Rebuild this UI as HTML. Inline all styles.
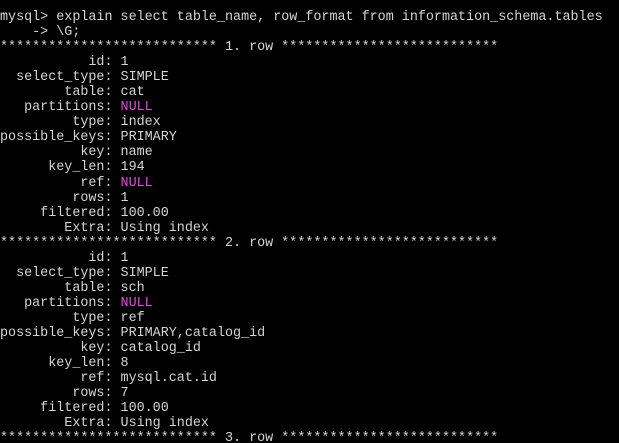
<html><head><style>
html,body{margin:0;background:#000;width:619px;height:443px;overflow:hidden}
pre{margin:0;position:absolute;top:10px;left:0;font-family:"Liberation Mono","DejaVu Sans Mono",monospace;font-size:13.4px;line-height:15.05px;color:#d4d4d4}
b{font-weight:normal;color:#f040f0}
</style></head><body><pre>mysql&gt; explain select table_name, row_format from information_schema.tables
    -&gt; \G;
*************************** 1. row ***************************
           id: 1
  select_type: SIMPLE
        table: cat
   partitions: <b>NULL</b>
         type: index
possible_keys: PRIMARY
          key: name
      key_len: 194
          ref: <b>NULL</b>
         rows: 1
     filtered: 100.00
        Extra: Using index
*************************** 2. row ***************************
           id: 1
  select_type: SIMPLE
        table: sch
   partitions: <b>NULL</b>
         type: ref
possible_keys: PRIMARY,catalog_id
          key: catalog_id
      key_len: 8
          ref: mysql.cat.id
         rows: 7
     filtered: 100.00
        Extra: Using index
*************************** 3. row ***************************
</pre></body></html>
